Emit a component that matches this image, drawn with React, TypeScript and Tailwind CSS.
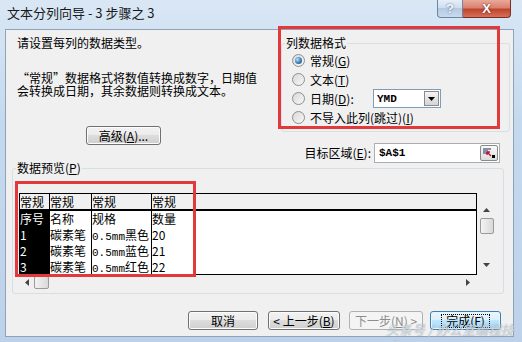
import type { ReactNode } from 'react'

function Radio({ checked = false }: { checked?: boolean }) {
  return (
    <span className="flex h-[13px] w-[13px] shrink-0 items-center justify-center rounded-full border border-[#8e8f8f] bg-[linear-gradient(135deg,#d8d8d8,#f8f8f8)]">
      {checked && (
        <span className="h-[7px] w-[7px] rounded-full bg-[radial-gradient(circle_at_35%_35%,#b5e3fa,#3a7cb3_55%,#1a4c78)]" />
      )}
    </span>
  )
}

function Btn({
  children,
  className = '',
  disabled = false,
  primary = false,
}: {
  children: ReactNode
  className?: string
  disabled?: boolean
  primary?: boolean
}) {
  const skin = disabled
    ? 'border-[#adb2b5] bg-[#f4f4f4] text-[#8d8d8d]'
    : primary
      ? 'border-[#3c7fb1] bg-[linear-gradient(#eaf6fd_0%,#d9f0fc_50%,#bee6fd_50%,#a7d9f5_100%)] shadow-[inset_0_0_0_1px_#e6f4fc]'
      : 'border-[#707070] bg-[linear-gradient(#f2f2f2_0%,#ebebeb_50%,#dddddd_50%,#cfcfcf_100%)] shadow-[inset_0_0_0_1px_#fcfcfc]'
  return (
    <div
      className={`flex h-[19px] shrink-0 items-center justify-center rounded-[3px] border leading-[14px] ${skin} ${className}`}
    >
      {primary ? (
        <span className="border border-dotted border-black px-[4px] leading-[12px]">{children}</span>
      ) : (
        children
      )}
    </div>
  )
}

const header = ['常规', '常规', '常规', '常规']
const widths = ['w-[30px]', 'w-[42px]', 'w-[60px]', 'w-[43px]']
const rows = [
  ['序号', '名称', '规格', '数量'],
  ['1', '碳素笔', '0.5mm黑色', '20'],
  ['2', '碳素笔', '0.5mm蓝色', '21'],
  ['3', '碳素笔', '0.5mm红色', '22'],
]

function Cell({ text }: { text: string }) {
  const m = text.match(/^(0\.5mm)(.*)$/)
  if (!m) return <>{text}</>
  return (
    <>
      <span className="font-['Liberation_Mono',monospace] text-[11px]">{m[1]}</span>
      {m[2]}
    </>
  )
}

export default function App() {
  return (
    <div className="relative flex h-[342px] w-[522px] flex-col overflow-hidden bg-[linear-gradient(180deg,#d9e7f5_0%,#c5d9ee_35%,#bdd2ea_100%)] font-['Noto_Sans_CJK_SC','Noto_Sans',sans-serif] text-[12px] leading-[14px] text-black">
      {/* title bar */}
      <div className="flex h-[29px] shrink-0 items-start">
        <div className="pl-[7px] pt-[4px] text-[13px] leading-[18px] text-[#1a1a1a]">文本分列向导 - 3 步骤之 3</div>
        <div className="ml-auto mr-[11px] flex">
          <div className="flex h-[18px] w-[26px] items-center justify-center rounded-bl-[4px] border border-t-0 border-[#6d86a3] bg-[linear-gradient(#e6eff9_0%,#cddcee_50%,#b4c9e2_50%,#c9daee_100%)] font-['Liberation_Sans',sans-serif] text-[13px] font-bold text-[#f4f8fc] [text-shadow:0_0_2px_#3c5878]">
            ?
          </div>
          <div className="flex h-[18px] w-[48px] items-center justify-center rounded-br-[4px] border border-l-0 border-t-0 border-[#7a2f25] bg-[linear-gradient(#e9a99b_0%,#d9826f_45%,#c0442c_55%,#d6705a_100%)] font-['Liberation_Sans',sans-serif] text-[13px] font-bold text-white [text-shadow:0_0_2px_#4a1208]">
            X
          </div>
        </div>
      </div>

      {/* client area */}
      <div className="mb-[5px] ml-[5px] mr-[8px] flex flex-1 flex-col border border-[#8ea3ba] bg-[#f0f0f0]">
        <div className="flex">
          {/* left column */}
          <div className="flex w-[272px] flex-col pl-[11px] pt-[6px]">
            <div>请设置每列的数据类型。</div>
            <p className="mt-[21px] leading-[13px]">
              “常规”数据格式将数值转换成数字，日期值
              <br />
              会转换成日期，其余数据则转换成文本。
            </p>
            <Btn className="ml-[69px] mt-[29px] w-[75px]">
              <span>
                高级(<u>A</u>)...
              </span>
            </Btn>
          </div>

          {/* right column */}
          <div className="flex flex-1 flex-col">
            <div className="ml-[3px] mt-[13px] h-[89px] w-[229px] rounded-[3px] border border-[#d5dfe5]">
              <div className="-mt-[8px] ml-[3px] w-fit bg-[#f0f0f0] px-[1px]">列数据格式</div>
              <div className="mt-[1px] flex flex-col">
                <div className="flex h-[19px] items-center gap-[5px] pl-[10px]">
                  <Radio checked />
                  <span>
                    常规(<u>G</u>)
                  </span>
                </div>
                <div className="flex h-[19px] items-center gap-[5px] pl-[10px]">
                  <Radio />
                  <span>
                    文本(<u>T</u>)
                  </span>
                </div>
                <div className="flex h-[19px] items-center gap-[5px] pl-[10px]">
                  <Radio />
                  <span className="w-[58px]">
                    日期(<u>D</u>):
                  </span>
                  <div className="flex h-[19px] w-[68px] items-center border border-[#7f9db9] bg-white pl-[3px]">
                    <span className="font-['Liberation_Mono',monospace] text-[11px] font-bold">YMD</span>
                    <div className="ml-auto mr-[1px] flex h-[15px] w-[15px] items-center justify-center border border-[#8b8b8b] bg-[linear-gradient(#f4f4f4,#d4d4d4)]">
                      <svg width="7" height="4" viewBox="0 0 7 4">
                        <path d="M0 0h7L3.5 4z" fill="#000" />
                      </svg>
                    </div>
                  </div>
                </div>
                <div className="flex h-[19px] items-center gap-[5px] pl-[10px]">
                  <Radio />
                  <span>
                    不导入此列(跳过)(<u>I</u>)
                  </span>
                </div>
              </div>
            </div>

            <div className="mt-[11px] flex h-[20px] items-center justify-end pr-[13px]">
              <span>
                目标区域(<u>E</u>):
              </span>
              <div className="ml-[3px] flex h-[20px] w-[126px] items-center border border-[#abadb3] bg-white pl-[4px]">
                <span className="font-['Liberation_Mono',monospace] text-[11px] font-bold">$A$1</span>
                <div className="ml-auto mr-[1px] flex h-[16px] w-[18px] items-center justify-center rounded-[2px] border border-[#8a8a8a] bg-[linear-gradient(#fafafa,#dcdcdc)]">
                  <svg width="12" height="10" viewBox="0 0 12 10">
                    <path d="M0 1h8M0 3h5M0 5h4" stroke="#1e2a5a" strokeWidth="1" />
                    <path d="M4 4l4 4M4 4h3M4 4v3" stroke="#c0102a" strokeWidth="1.3" fill="none" />
                    <rect x="9" y="7" width="3" height="3" fill="#000" />
                  </svg>
                </div>
              </div>
            </div>
          </div>
        </div>

        {/* preview group */}
        <div className="ml-[6px] mt-[5px] h-[126px] w-[492px] rounded-[3px] border border-[#d5dfe5]">
          <div className="-mt-[8px] ml-[3px] w-fit bg-[#f0f0f0] px-[1px]">
            数据预览(<u>P</u>)
          </div>
          <div className="ml-[6px] mt-[18px] flex">
            <div className="flex w-[458px] flex-col">
              <div className="flex h-[82px] flex-col overflow-hidden border border-black">
                <div className="flex h-[17px] shrink-0 border-b-2 border-black bg-[#f0f0f0]">
                  {header.map((h, i) => (
                    <div key={i} className={`${widths[i]} h-full border-r border-black leading-[15px]`}>
                      {h}
                    </div>
                  ))}
                </div>
                <div className="flex flex-1 bg-white">
                  {widths.map((w, c) => (
                    <div
                      key={c}
                      className={`${w} flex h-full flex-col border-r border-black ${c === 0 ? 'bg-black text-white' : ''}`}
                    >
                      {rows.map((r, i) => (
                        <div key={i} className="h-[16px] shrink-0 whitespace-nowrap leading-[16px]">
                          <Cell text={r[c]} />
                        </div>
                      ))}
                    </div>
                  ))}
                </div>
              </div>
              <div className="flex h-[15px] items-center">
                <svg className="ml-[6px]" width="4" height="7" viewBox="0 0 4 7">
                  <path d="M4 0v7L0 3.5z" fill="#444" />
                </svg>
                <div className="ml-[5px] h-[13px] w-[15px] rounded-[2px] border border-[#9a9a9a] bg-[linear-gradient(90deg,#f3f3f3,#d9d9d9)]" />
                <svg className="ml-auto mr-[7px]" width="4" height="7" viewBox="0 0 4 7">
                  <path d="M0 0v7l4-3.5z" fill="#444" />
                </svg>
              </div>
            </div>
            <div className="flex h-[82px] w-[19px] flex-col items-center">
              <svg className="mt-[15px]" width="7" height="4" viewBox="0 0 7 4">
                <path d="M0 4h7L3.5 0z" fill="#444" />
              </svg>
              <div className="mt-[6px] h-[16px] w-[14px] rounded-[2px] border border-[#9a9a9a] bg-[linear-gradient(90deg,#f3f3f3,#d9d9d9)]" />
              <svg className="mt-[29px]" width="7" height="4" viewBox="0 0 7 4">
                <path d="M0 0h7L3.5 4z" fill="#444" />
              </svg>
            </div>
          </div>
        </div>

        {/* buttons */}
        <div className="ml-[182px] mt-[17px] flex">
          <Btn className="w-[70px]">取消</Btn>
          <Btn className="ml-[10px] w-[72px]">
            <span>
              &lt; 上一步(<u>B</u>)
            </span>
          </Btn>
          <Btn disabled className="ml-[9px] w-[74px]">
            <span>
              下一步(<u>N</u>) &gt;
            </span>
          </Btn>
          <Btn primary className="ml-[7px] w-[71px]">
            完成(<u>F</u>)
          </Btn>
        </div>
      </div>

      {/* annotations */}
      <div className="pointer-events-none absolute left-[278px] top-[26px] h-[103px] w-[222px] border-[3px] border-[#e2393d]" />
      <div className="pointer-events-none absolute left-[15px] top-[181px] h-[96px] w-[181px] border-[3px] border-[#e2393d]" />
      <div className="pointer-events-none absolute left-[386px] top-[322px] text-[13px] italic leading-[16px] text-white/60 [text-shadow:0_0_1px_#7a8a9a]">
        头条号 / 办公室编程技术
      </div>
    </div>
  )
}
